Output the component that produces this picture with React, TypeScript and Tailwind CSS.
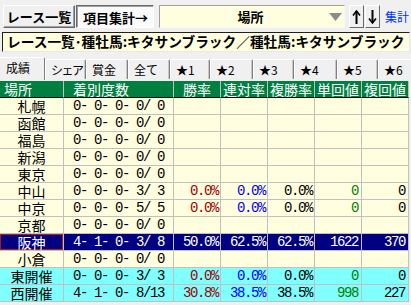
import React from 'react';

type Row = {
  name: string;
  rec: string;
  win?: string;
  ren?: string;
  fuku?: string;
  tan?: string;
  fk?: string;
  kind?: 'sel' | 'cyan';
};

const rows: Row[] = [
  { name: '札幌', rec: '0- 0- 0- 0/ 0' },
  { name: '函館', rec: '0- 0- 0- 0/ 0' },
  { name: '福島', rec: '0- 0- 0- 0/ 0' },
  { name: '新潟', rec: '0- 0- 0- 0/ 0' },
  { name: '東京', rec: '0- 0- 0- 0/ 0' },
  { name: '中山', rec: '0- 0- 0- 3/ 3', win: '0.0%', ren: '0.0%', fuku: '0.0%', tan: '0', fk: '0' },
  { name: '中京', rec: '0- 0- 0- 5/ 5', win: '0.0%', ren: '0.0%', fuku: '0.0%', tan: '0', fk: '0' },
  { name: '京都', rec: '0- 0- 0- 0/ 0' },
  { name: '阪神', rec: '4- 1- 0- 3/ 8', win: '50.0%', ren: '62.5%', fuku: '62.5%', tan: '1622', fk: '370', kind: 'sel' },
  { name: '小倉', rec: '0- 0- 0- 0/ 0' },
  { name: '東開催', rec: '0- 0- 0- 3/ 3', win: '0.0%', ren: '0.0%', fuku: '0.0%', tan: '0', fk: '0', kind: 'cyan' },
  { name: '西開催', rec: '4- 1- 0- 8/13', win: '30.8%', ren: '38.5%', fuku: '38.5%', tan: '998', fk: '227', kind: 'cyan' },
];

const tabs = [
  { t: 'シェア', w: 'w-[41px]', tr: 'tracking-[-1.5px]' },
  { t: '賞金', w: 'w-[42px]', tr: '' },
  { t: '全て', w: 'w-[42px]', tr: '' },
  { t: '★1', w: 'w-[40px]', tr: '' },
  { t: '★2', w: 'w-[43px]', tr: '' },
  { t: '★3', w: 'w-[41px]', tr: '' },
  { t: '★4', w: 'w-[43px]', tr: '' },
  { t: '★5', w: 'w-[41px]', tr: '' },
  { t: '★6', w: 'w-[42px]', tr: '' },
];

function UpArrow() {
  return (
    <svg width="9" height="16" viewBox="0 0 9 16">
      <path d="M4.5 2 V15" stroke="#000" strokeWidth="2" />
      <path d="M1 6.5 L4.5 2 L8 6.5" stroke="#000" strokeWidth="1.6" fill="none" />
    </svg>
  );
}

function DownArrow() {
  return (
    <svg width="9" height="16" viewBox="0 0 9 16">
      <path d="M4.5 1 V14" stroke="#000" strokeWidth="2" />
      <path d="M1 9.5 L4.5 14 L8 9.5" stroke="#000" strokeWidth="1.6" fill="none" />
    </svg>
  );
}

const cellBase = 'h-[17px] border-r border-b border-[#c0c0c0] leading-[16px] whitespace-pre';
const mono = "font-['Liberation_Mono',monospace] text-[14px] tracking-[-1.4px]";
const headCell = 'h-[17px] bg-[#008040] text-white text-[14px] leading-[16px] border-r border-r-[#c0c0c0] border-b border-b-black whitespace-nowrap';

export default function App() {
  return (
    <div className="w-[411px] h-[305px] overflow-hidden bg-[#f0f0f0] font-['Noto_Sans_CJK_JP',sans-serif] text-black">
      {/* top bar */}
      <div className="flex items-start pt-[5px] pl-[3px] h-[28px]">
        <div className="shrink-0 w-[72px] h-[23px] flex items-center justify-center text-[13px] font-bold leading-none whitespace-nowrap border border-t-white border-l-white border-r-[#696969] border-b-[#696969] bg-[#f0f0f0] shadow-[inset_-1px_-1px_0_#a0a0a0]">
          レース一覧
        </div>
        <div className="shrink-0 ml-[1px] w-[78px] h-[23px] flex items-center justify-center pl-[1px] pt-[1px] text-[13px] font-bold leading-none whitespace-nowrap border border-t-[#696969] border-l-[#696969] border-r-white border-b-white bg-[#fbfbfb] shadow-[inset_1px_1px_0_#a0a0a0]">
          項目集計→
        </div>
        <div className="shrink-0 ml-[5px] w-[186px] h-[23px] flex items-center border border-t-[#a0a0a0] border-l-[#a0a0a0] border-r-[#f8f8f8] border-b-[#f8f8f8] bg-[#ffffe0]">
          <div className="flex-1 flex justify-center pl-[12px] text-[13px] font-bold leading-none">場所</div>
          <svg width="13" height="8" viewBox="0 0 13 8" className="mr-[2px]">
            <polygon points="0,0 13,0 6.5,8" fill="#8c8c8c" />
          </svg>
        </div>
        <div className="shrink-0 ml-[4px] w-[15px] h-[23px] flex items-center justify-center border border-t-white border-l-white border-r-[#696969] border-b-[#696969] bg-[#f0f0f0]">
          <UpArrow />
        </div>
        <div className="shrink-0 ml-[1px] w-[15px] h-[23px] flex items-center justify-center border border-t-white border-l-white border-r-[#696969] border-b-[#696969] bg-[#f0f0f0]">
          <DownArrow />
        </div>
        <div className="shrink-0 ml-[5px] h-[23px] flex items-center text-[12px] text-[#0033ff] leading-none whitespace-nowrap">集計</div>
      </div>

      {/* title */}
      <div className="mt-[4px] ml-[2px] mr-[1px] h-[20px] flex items-center pl-[4px] border border-t-[#202020] border-l-[#202020] border-r-[#e8e8e8] border-b-[#e8e8e8] bg-[#ffffe0] text-[13.7px] font-bold leading-none whitespace-nowrap overflow-hidden">
        レース一覧･種牡馬:キタサンブラック／種牡馬:キタサンブラック
      </div>

      {/* tabs */}
      <div className="mt-[5px] h-[24px] flex items-start">
        <div className="shrink-0 w-[45px] h-[23px] flex items-start pt-[3px] pl-[6px] text-[12px] leading-[14px] whitespace-nowrap border-t border-white border-r border-r-[#808080] bg-[#f0f0f0] rounded-tr-[2px]">
          成績
        </div>
        {tabs.map((t) => (
          <div
            key={t.t}
            className={`mt-[2px] h-[20px] ${t.w} shrink-0 flex items-center pl-[5px] text-[12px] leading-none whitespace-nowrap ${t.tr} border-t border-l border-white border-r border-r-[#808080] shadow-[inset_-1px_0_0_#c8c8c8] rounded-t-[2px] bg-[#f0f0f0]`}
          >
            {t.t}
          </div>
        ))}
      </div>

      {/* grid */}
      <div className="grid grid-cols-[64px_110px_47px_47px_47px_47px_47px] w-[409px]">
        <div className={`${headCell} pl-[4px]`}>場所</div>
        <div className={`${headCell} pl-[9px]`}>着別度数</div>
        {['勝率', '連対率', '複勝率', '単回値', '複回値'].map((h) => (
          <div key={h} className={`${headCell} text-center`}>
            {h}
          </div>
        ))}
        {rows.map((r) => {
          const sel = r.kind === 'sel';
          const bg = sel ? 'bg-[#000080]' : r.kind === 'cyan' ? 'bg-[#80ffff]' : 'bg-[#ffffe0]';
          const c = (cls: string) => (sel ? 'text-white' : cls);
          return (
            <React.Fragment key={r.name}>
              <div className={`${cellBase} ${bg} ${c('text-black')} text-[14px] text-center ${sel ? 'shadow-[inset_0_0_0_1px_#a02020]' : ''}`}>{r.name}</div>
              <div className={`${cellBase} ${bg} ${c('text-black')} ${mono} pl-[9px]`}>{r.rec}</div>
              <div className={`${cellBase} ${bg} ${c('text-[#a00000]')} ${mono} text-right pr-[2px]`}>{r.win ?? ''}</div>
              <div className={`${cellBase} ${bg} ${c('text-[#0000ff]')} ${mono} text-right pr-[2px]`}>{r.ren ?? ''}</div>
              <div className={`${cellBase} ${bg} ${c('text-black')} ${mono} text-right pr-[2px]`}>{r.fuku ?? ''}</div>
              <div className={`${cellBase} ${bg} ${c('text-[#008000]')} ${mono} text-right pr-[3px]`}>{r.tan ?? ''}</div>
              <div className={`${cellBase} ${bg} ${c('text-black')} ${mono} text-right pr-[3px]`}>{r.fk ?? ''}</div>
            </React.Fragment>
          );
        })}
      </div>
    </div>
  );
}
